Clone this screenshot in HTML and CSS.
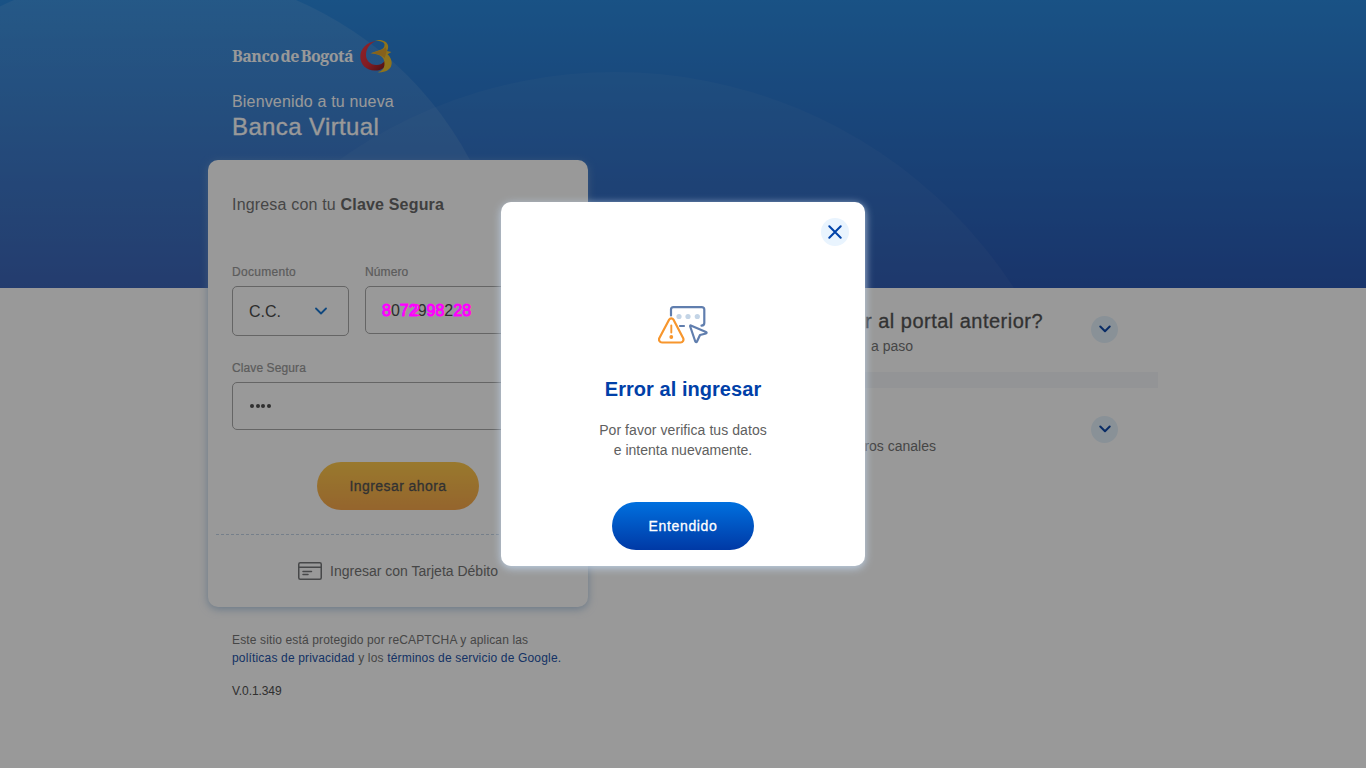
FILE: index.html
```html
<!DOCTYPE html>
<html lang="es">
<head>
<meta charset="utf-8">
<title>Banca Virtual</title>
<link rel="stylesheet" href="styles.css">
</head>
<body>
<div class="page">
  <svg class="waves" width="1366" height="288" viewBox="0 0 1366 288" aria-hidden="true">
    <defs>
      <linearGradient id="fade" x1="0" y1="0" x2="0" y2="288" gradientUnits="userSpaceOnUse"><stop offset="0" stop-color="#fff" stop-opacity=".09"/><stop offset="1" stop-color="#fff" stop-opacity=".08"/></linearGradient>
    </defs>
    <circle cx="155" cy="328" r="357" fill="url(#fade)"/>
    <circle cx="615" cy="548.5" r="476.5" fill="#fff" fill-opacity=".04"/>
  </svg>
  <div class="content">
    <main class="login">
      <header class="brand">
        <div class="logo">
          <span class="logo-name">Banco de Bogotá</span>
          <svg width="33" height="33" viewBox="0 0 33 33" aria-hidden="true">
            <defs><linearGradient id="red" x1="0" y1="0" x2="1" y2="1"><stop offset="0" stop-color="#f03b46"/><stop offset=".55" stop-color="#d9303b"/><stop offset="1" stop-color="#7d1a20"/></linearGradient></defs>
            <path d="M16 1C7 2 .3 9 .3 16.500c0 9 7 14.500 15.200 14 5 0 8-2 9.500-4.500v-5.500c-2 3-5 4.500-8.500 4.500C10 25 5.500 20 6 14 6.400 8 10.500 3 16 1z" fill="url(#red)"/>
            <path d="M15 .7c6-2 12 .5 13 4.800.5 2-.2 4-1 5.500l4.400 1-3.800 2.200c3.500 3.500 4.800 7.500 3.700 11.300-1.200 4.200-6.500 7.500-14 6.800 5-1 7.200-4 7.200-8.500 0-4-1.500-6.500-4.500-8.300-3-1.500-6.500-2-9.500-2.300l9.500-3.200c3-1 4.500-2.500 4.500-5C25 2 20.500.7 15 .7z" fill="#efc02d"/>
            <path d="M11.500 13.200l10-3.400c2-.8 3.500-1.600 4.200-2.800l1 4-2 7c-3-3-8-4.300-13.200-4.800z" fill="#dfa22e"/>
          </svg>
        </div>
        <p class="welcome">Bienvenido a tu nueva</p>
        <h1 class="title">Banca Virtual</h1>
      </header>
      <section class="card">
        <p class="card-title">Ingresa con tu <b>Clave Segura</b></p>
        <div class="row">
          <div class="field doc"><label>Documento</label>
            <div class="control select"><span>C.C.</span><svg width="12" height="8" viewBox="0 0 12 8"><path d="M1 1.500l5 5 5-5" fill="none" stroke="#1b78d2" stroke-width="1.800" stroke-linecap="round" stroke-linejoin="round"/></svg></div>
          </div>
          <div class="field number"><label>Número</label>
            <div class="control"><span class="digits"><em>8</em>0<em>7</em><em class="wide">2</em>9<em>98</em>2<em>28</em></span></div>
          </div>
        </div>
        <div class="field key"><label>Clave Segura</label>
          <div class="control"><span class="dots"><i></i><i></i><i></i><i></i></span></div>
        </div>
        <div class="submit">Ingresar ahora</div>
        <div class="divider"></div>
        <div class="debit">
          <svg width="24" height="18" viewBox="0 0 24 18" fill="none" stroke="#77797b" stroke-width="1.500" stroke-linecap="round"><rect x=".75" y=".75" width="22.500" height="16.500" rx="1.500"/><path d="M1 5.300h22M5 9.500h8.500M5 12.500h5"/></svg>
          <span>Ingresar con Tarjeta Débito</span>
        </div>
      </section>
      <footer class="legal">
        <p class="l1">Este sitio está protegido por reCAPTCHA y aplican las</p>
        <p class="l2"><a>políticas de privacidad</a> y los <a>términos de servicio de Google.</a></p>
        <p class="version">V.0.1.349</p>
      </footer>
    </main>
    <aside class="help">
      <div class="item"><div class="item-text"><h2>r al portal anterior?</h2><p class="s1">a paso</p></div>
        <span class="chev"><svg width="12" height="8" viewBox="0 0 12 8"><path d="M1.300 1.500L6 6.200l4.700-4.700" fill="none" stroke="#0f4aab" stroke-width="2" stroke-linecap="round" stroke-linejoin="round"/></svg></span></div>
      <div class="band"></div>
      <div class="item second"><div class="item-text"><p class="s2">otros canales</p></div>
        <span class="chev"><svg width="12" height="8" viewBox="0 0 12 8"><path d="M1.300 1.500L6 6.200l4.700-4.700" fill="none" stroke="#0f4aab" stroke-width="2" stroke-linecap="round" stroke-linejoin="round"/></svg></span></div>
    </aside>
  </div>
</div>
<div class="overlay">
  <div class="modal">
    <span class="close"><svg width="14" height="14" viewBox="0 0 14 14"><path d="M1.300 1.300l11.400 11.400M12.700 1.300L1.300 12.700" stroke="#0043a9" stroke-width="2" stroke-linecap="round"/></svg></span>
    <svg class="art" width="50" height="38" viewBox="0 0 50 38" fill="none" stroke-linecap="round" stroke-linejoin="round" stroke-width="2.200">
      <path d="M13 9.500V3.500C13 2 14 1.100 15.500 1.100h28C45 1.100 46.300 2 46.300 3.500v13.500c0 1.600-.8 2.500-2.800 2.700M22 20h4" stroke="#607eae"/>
      <g fill="#c3d4e6"><circle cx="21" cy="10.500" r="2.600"/><circle cx="30" cy="10.500" r="2.600"/><circle cx="39.300" cy="10.500" r="2.600"/></g>
      <path d="M32.800 19.500l15.200 6.500c.9.400.8 1.300 0 1.500l-6 1.500-3 6.500c-.4.900-1.400.9-1.700 0l-5.100-15c-.2-.7 0-1.200.6-1z" stroke="#607eae"/>
      <path d="M11.200 13.500c1-1.600 3.200-1.600 4.200 0l9.700 18.500c1 2-.2 4.500-2.500 4.500H4c-2.300 0-3.700-2.500-2.600-4.500z" stroke="#f7962d"/>
      <path d="M13.300 19.500v7" stroke="#f7962d" stroke-width="1.900"/><circle cx="13.300" cy="31" r="1.900" fill="#f7962d"/>
    </svg>
    <h3 class="m-title">Error al ingresar</h3>
    <p class="m-text"><span class="t1">Por favor verifica tus datos</span><br><span class="t2">e intenta nuevamente.</span></p>
    <div class="m-btn">Entendido</div>
  </div>
</div>
</body>
</html>
```

FILE: styles.css
```css
* { box-sizing: border-box; }
body { margin: 0; font-family: "Liberation Sans", sans-serif; color: #6b6b6b; }
h1, h2, h3, p { margin: 0; font-weight: 400; }
.page { height: 768px; overflow: hidden; position: relative; background: linear-gradient(180deg, #2b89de 0, #2b58b2 288px, #fff 288px); }
.waves { position: absolute; left: 0; top: 0; }
.content { position: relative; display: flex; width: 950px; margin-left: 208px; }
.login { width: 380px; flex: none; }
.brand { height: 160px; padding: 40px 24px 0; color: #fff; }
.logo { display: flex; align-items: center; gap: 6px; height: 33px; }
.logo-name { width: 122px; font: bold 16px/24px "Noto Serif", "DejaVu Serif", serif; letter-spacing: -.5px; word-spacing: -2px; white-space: nowrap; padding-bottom: 1px; }
.welcome { font-size: 16px; line-height: 20px; margin-top: 19px; white-space: nowrap; letter-spacing: .17px; }
.title { font-size: 24px; line-height: 28px; margin-top: 1px; letter-spacing: .38px; -webkit-text-stroke: .3px; }
.card { height: 447px; background: #fff; border-radius: 10px; padding: 35px 8px 0; box-shadow: 0 2px 8px rgba(132,171,210,.65); }
.card-title { margin-left: 16px; line-height: 20px; font-size: 16px; letter-spacing: .18px; color: #757575; }
.card-title b { color: #6a6a6a; }
.row { display: flex; gap: 16px; margin: 49px 16px 0; }
.field label { display: block; font-size: 12px; line-height: 16px; margin-bottom: 6px; color: #999; letter-spacing: .1px; -webkit-text-stroke: .2px; }
.doc label { letter-spacing: .3px; }
.doc { width: 117px; }
.number { flex: 1; }
.control { height: 48px; border: 1px solid #a8a8a8; border-radius: 5px; padding: 0 16px; display: flex; align-items: center; font-size: 16px; color: #4b4b4b; }
.control > span { padding-top: 2px; }
.control > .dots { padding: 0 0 0 1px; }
.select { height: 50px; justify-content: space-between; padding-right: 21px; }
/* highlighted digits sit above the dimming layer */
.digits em { position: relative; z-index: 2; font-style: normal; color: #f0f; -webkit-text-stroke: 1px #f0f; }
.digits .wide { text-shadow: 3px 0 0 #f0f; }
.key { margin: 24px 16px 0; }
.dots { display: flex; gap: 1.600px; }
.dots i { width: 4px; height: 4px; border-radius: 50%; background: #505050; }
.submit { width: 162px; height: 48px; margin: 32px auto 0; border-radius: 24px; background: linear-gradient(#ffca4c, #f8a84c); text-align: center; line-height: 48px; font-size: 14px; letter-spacing: .43px; color: #545454; -webkit-text-stroke: .3px; }
.divider { height: 1px; margin-top: 24px; background: repeating-linear-gradient(90deg, #c3d4e6 0 3px, transparent 3px 5px); }
.debit { display: flex; justify-content: center; align-items: center; gap: 8px; margin-top: 27px; height: 18px; font-size: 14px; line-height: 18px; color: #757575; white-space: nowrap; }
.legal { padding: 24px 24px 0; font-size: 12px; line-height: 18px; color: #757575; white-space: nowrap; }
.legal .l1 { letter-spacing: .14px; }
.legal .l2 { letter-spacing: .17px; }
.legal a { color: #2454a9; }
.version { margin-top: 15px; color: #505050; letter-spacing: -.08px; }
.help { width: 492px; margin-left: 78px; padding-top: 288px; }
.item { display: flex; justify-content: space-between; height: 84px; padding: 20px 40px 0 0; }
.item-text { width: 377px; text-align: right; white-space: nowrap; }
.item h2 { color: #545454; font-size: 20px; line-height: 26px; letter-spacing: .48px; -webkit-text-stroke: .3px; }
.item p { font-size: 14px; line-height: 20px; margin-top: 2px; color: #757575; }
.s1 { padding-right: 130px; }
.s2 { padding-right: 107px; }
.band { height: 16px; background: #f5f7fa; }
.second { padding-top: 28px; }
.second .item-text { padding-top: 18px; }
.chev { width: 27px; height: 27px; border-radius: 50%; background: #e5f2fc; display: flex; align-items: center; justify-content: center; margin-top: 8px; padding-bottom: 1px; }
.second .chev { margin-top: 0; }
.overlay { position: absolute; inset: 0; background: rgba(0,0,0,.4); display: flex; align-items: center; justify-content: center; }
.modal { width: 364px; height: 364px; background: #fff; border-radius: 10px; padding: 16px; display: flex; flex-direction: column; align-items: center; box-shadow: 0 2px 8px #bed1e6; }
.close { width: 28px; height: 28px; border-radius: 50%; background: #e9f4fe; align-self: flex-end; display: flex; align-items: center; justify-content: center; }
.art { margin-top: 60px; }
.m-title { margin-top: 33px; font-size: 20px; line-height: 24px; font-weight: 700; letter-spacing: .05px; color: #0040a8; }
.m-text { margin-top: 19px; font-size: 14px; line-height: 20px; color: #606060; text-align: center; white-space: nowrap; }
.t1 { letter-spacing: .07px; }
.m-btn { width: 142px; height: 48px; margin-top: 42px; border-radius: 24px; background: linear-gradient(#0070df, #0039a5); color: #fff; text-align: center; line-height: 48px; font-size: 14px; letter-spacing: .65px; -webkit-text-stroke: .3px; }
```
